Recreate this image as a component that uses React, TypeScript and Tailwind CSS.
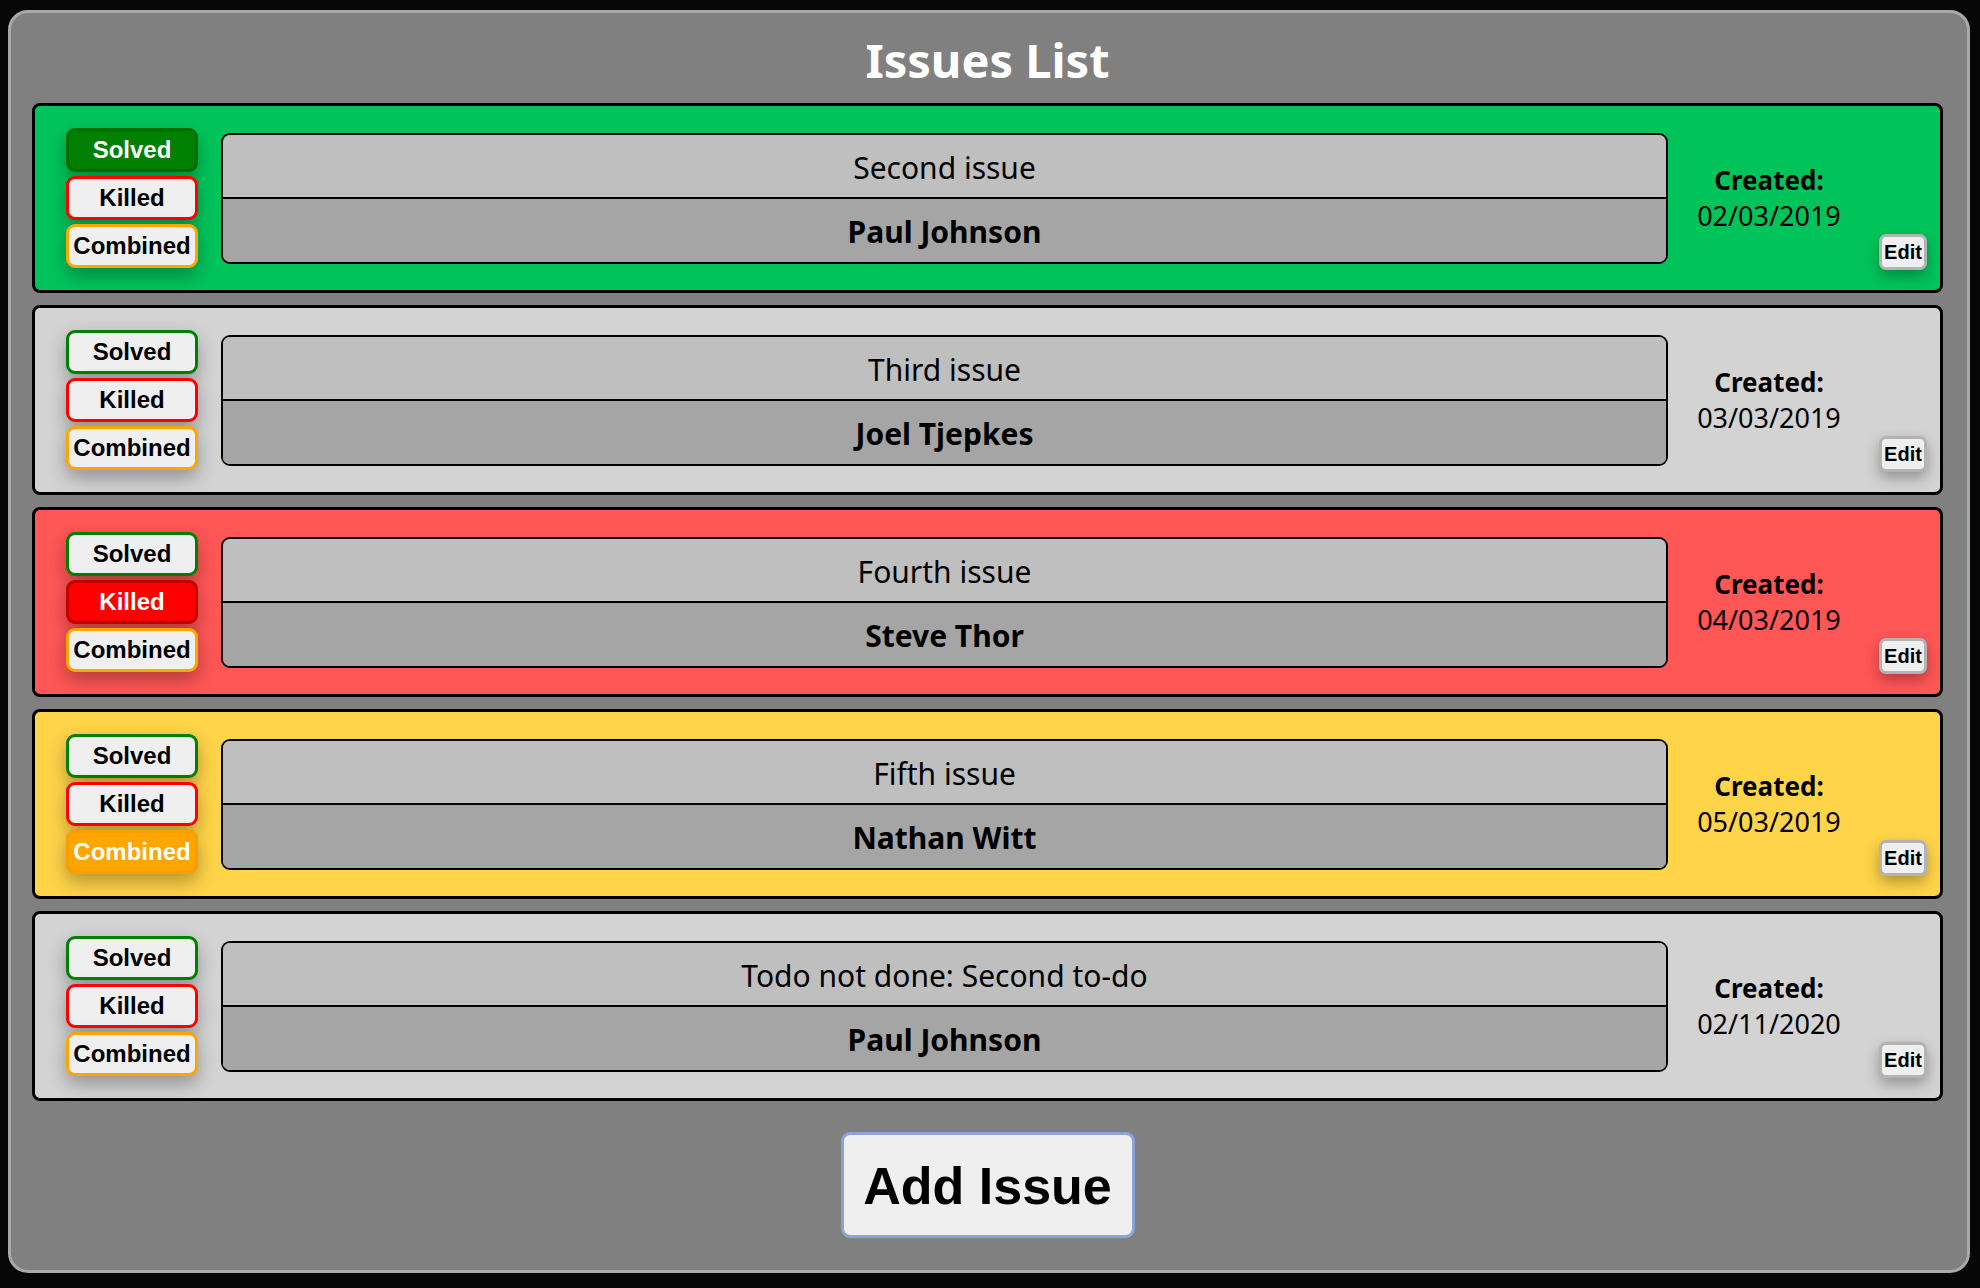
import React from "react";

type Status = "solved" | "killed" | "combined" | null;

type Issue = {
  id: number;
  title: string;
  author: string;
  created: string;
  status: Status;
};

const issues: Issue[] = [
  { id: 2, title: "Second issue", author: "Paul Johnson", created: "02/03/2019", status: "solved" },
  { id: 3, title: "Third issue", author: "Joel Tjepkes", created: "03/03/2019", status: null },
  { id: 4, title: "Fourth issue", author: "Steve Thor", created: "04/03/2019", status: "killed" },
  { id: 5, title: "Fifth issue", author: "Nathan Witt", created: "05/03/2019", status: "combined" },
  { id: 6, title: "Todo not done: Second to-do", author: "Paul Johnson", created: "02/11/2020", status: null },
];

const cardBg: Record<string, string> = {
  solved: "bg-[#00c45a]",
  killed: "bg-[#ff5656]",
  combined: "bg-[#ffd449]",
  none: "bg-[#d3d3d3]",
};

const btnBase =
  "flex h-[44px] w-[132px] items-center justify-center rounded-[9px] border-[3px] font-['Liberation_Sans',Arial,sans-serif] text-[24px] font-bold leading-none shadow-[0_8px_18px_rgba(0,0,0,0.3)]";

function StatusButtons({ status }: { status: Status }) {
  return (
    <div className="flex flex-col gap-[4px]">
      <button
        className={`${btnBase} ${
          status === "solved"
            ? "border-[#006d00] bg-[#008000] text-white"
            : "border-[#008000] bg-[#efefef] text-black"
        }`}
      >
        Solved
      </button>
      <button
        className={`${btnBase} ${
          status === "killed"
            ? "border-[#c40000] bg-[#ff0000] text-white"
            : "border-[#ff0000] bg-[#efefef] text-black"
        }`}
      >
        Killed
      </button>
      <button
        className={`${btnBase} ${
          status === "combined"
            ? "border-[#fb9c00] bg-[#ffa500] text-white"
            : "border-[#ffa500] bg-[#efefef] text-black"
        }`}
      >
        Combined
      </button>
    </div>
  );
}

function IssueCard({ issue }: { issue: Issue }) {
  return (
    <div
      className={`flex h-[190px] items-center rounded-[8px] border-[3px] border-black pl-[31px] pr-[13px] ${
        cardBg[issue.status ?? "none"]
      }`}
    >
      <StatusButtons status={issue.status} />

      {/* title + author */}
      <div className="ml-[23px] flex h-[131px] flex-1 flex-col overflow-hidden rounded-[9px] border-2 border-black text-black">
        <div className="flex flex-1 items-center justify-center border-b-2 border-black bg-[#bfbfbf] pt-[3px] text-[30px] font-normal">
          {issue.title}
        </div>
        <div className="flex flex-1 items-center justify-center bg-[#a5a5a5] pt-[3px] text-[30px] font-bold">
          {issue.author}
        </div>
      </div>

      <div className="w-[202px] text-center leading-[36px] text-black">
        <div className="text-[26px] font-bold">Created:</div>
        <div className="text-[27px]">{issue.created}</div>
      </div>

      <button className="mb-[20px] ml-[9px] flex h-[36px] w-[48px] items-center justify-center self-end rounded-[7px] border-[3px] border-[#b3b3b3] bg-[#efefef] font-['Liberation_Sans',Arial,sans-serif] text-[20px] font-bold text-black shadow-[0_6px_14px_rgba(0,0,0,0.3)]">
        Edit
      </button>
    </div>
  );
}

export default function App() {
  return (
    <div className="h-[1288px] w-[1980px] overflow-hidden bg-[#070707] pl-[8px] pt-[10px] font-['Noto_Sans',sans-serif]">
      <div className="flex h-[1263px] w-[1962px] flex-col rounded-[20px] border-[3px] border-[#a9a9a9] bg-[#808080] pl-[21px] pr-[24px]">
        <h1 className="flex h-[90px] shrink-0 items-center justify-center pt-[4px] text-[47px] font-bold text-white">
          Issues List
        </h1>

        <div className="flex flex-col gap-[12px]">
          {issues.map((issue) => (
            <IssueCard key={issue.id} issue={issue} />
          ))}
        </div>

        <button className="mx-auto mt-[31px] flex h-[106px] w-[294px] items-center justify-center rounded-[9px] border-[3px] border-[#8ba5d9] bg-[#efefef] pt-[2px] font-['Liberation_Sans',Arial,sans-serif] text-[52px] font-bold text-black">
          Add Issue
        </button>
      </div>
    </div>
  );
}
